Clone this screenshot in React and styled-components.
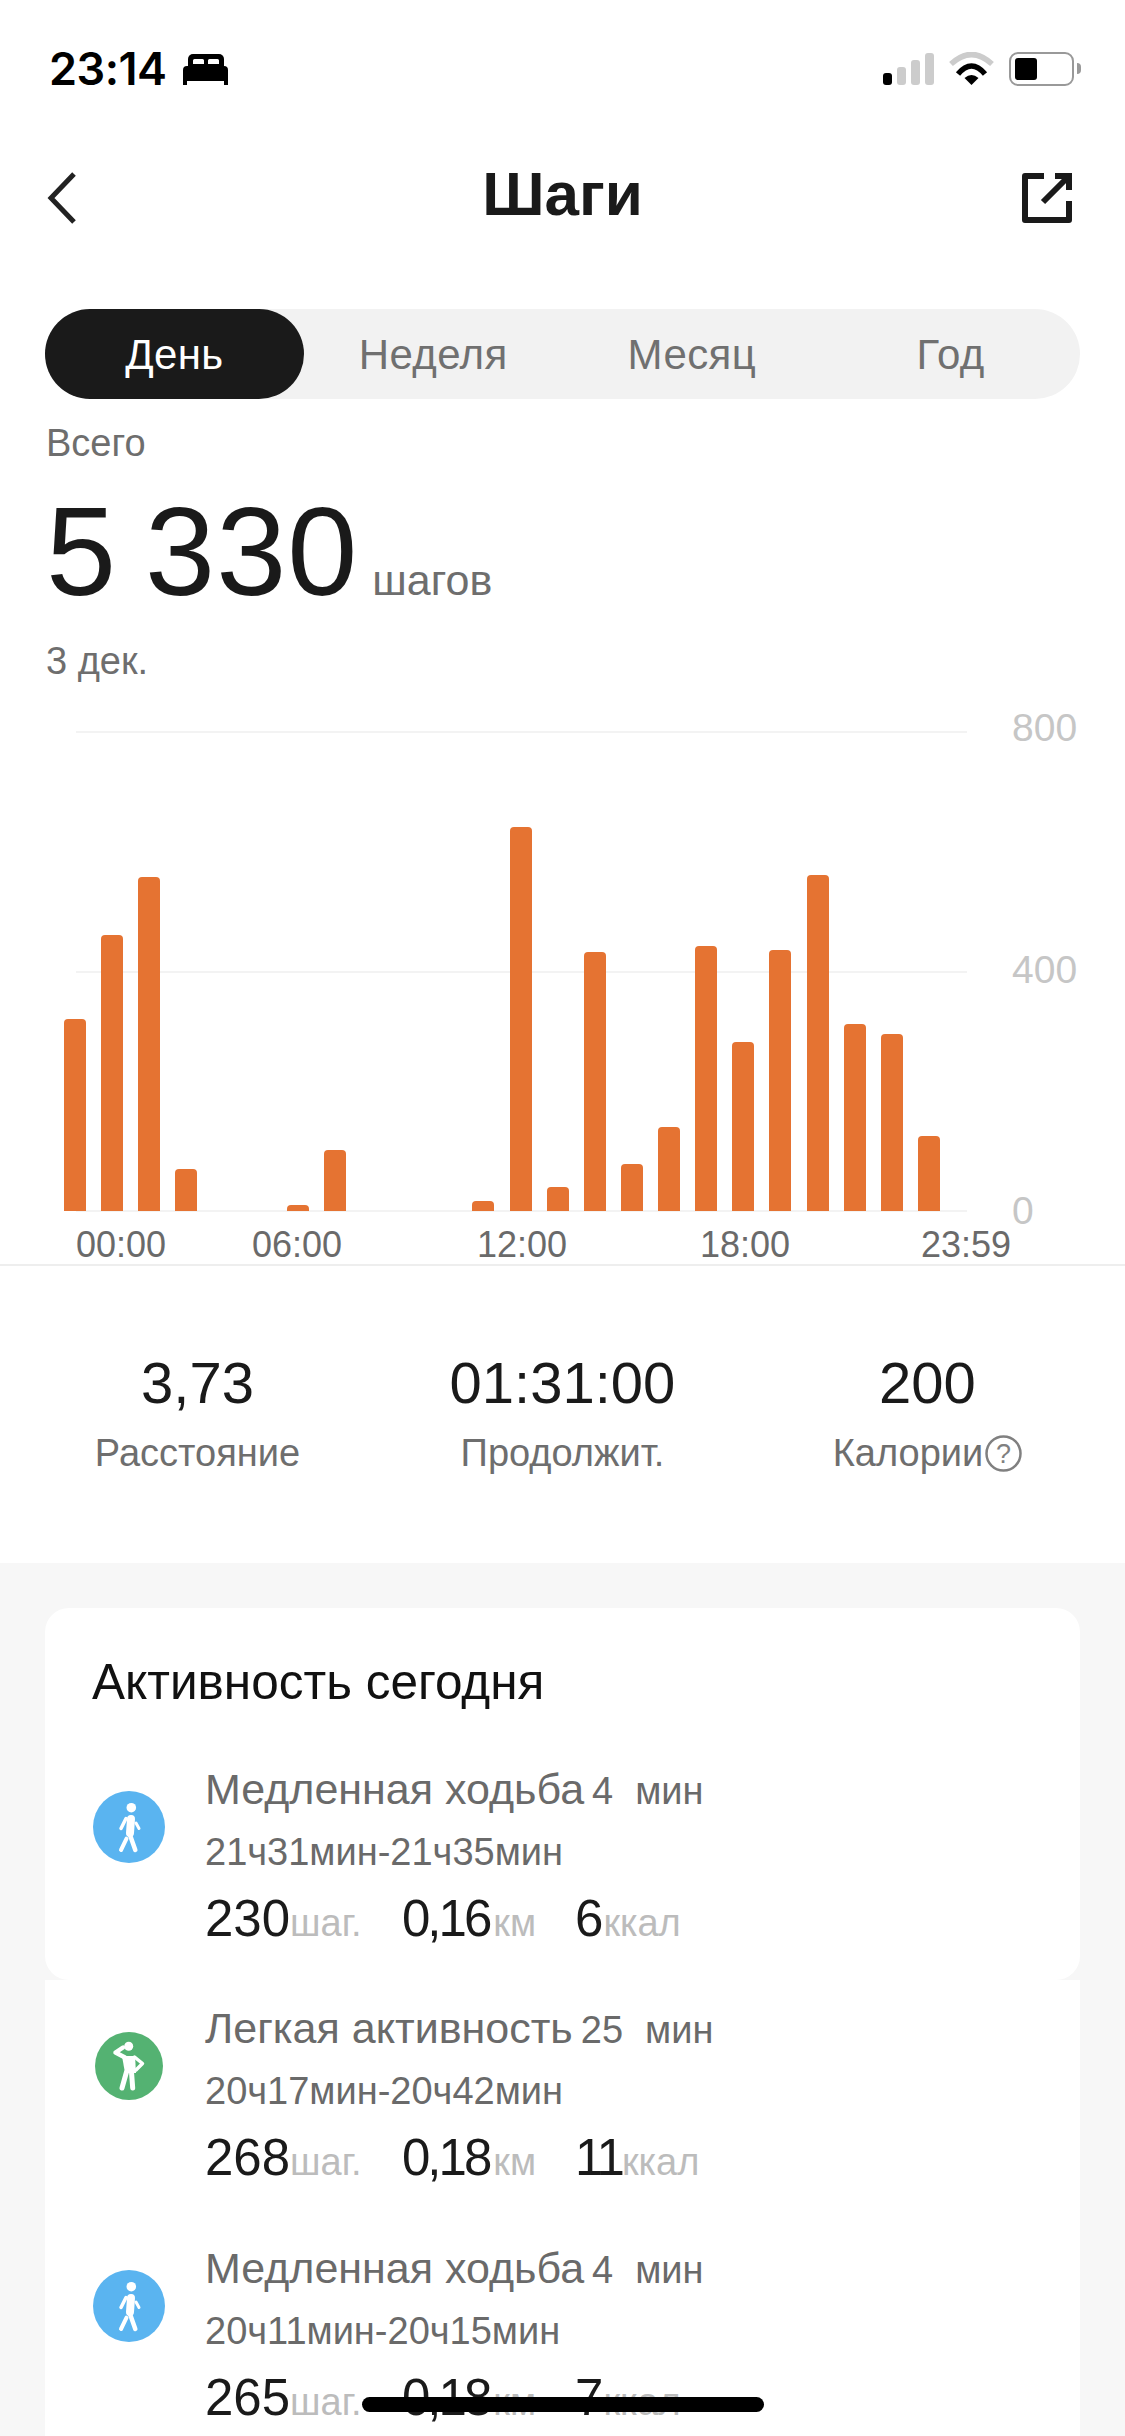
import React from 'react'
import styled, { createGlobalStyle } from 'styled-components'

const TEXT_FONT = '"Liberation Sans", Arial, sans-serif'
const UI_FONT = 'Inter, "Liberation Sans", sans-serif'

const GlobalStyle = createGlobalStyle`
  html, body {
    margin: 0;
    padding: 0;
    background: #fff;
  }
  * {
    box-sizing: border-box;
  }
`

const Screen = styled.div`
  position: relative;
  width: 1125px;
  height: 2436px;
  overflow: hidden;
  background: #fff;
  color: #1a1a1a;
  font-family: ${TEXT_FONT};
`

const StatusBar = styled.div`
  display: flex;
  justify-content: space-between;
  align-items: flex-start;
  height: 138px;
  padding: 47px 51px 0 49px;
`

const StatusLeft = styled.div`
  display: flex;
  align-items: center;
  gap: 16px;
`

const Time = styled.span`
  font-family: ${UI_FONT};
  font-size: 45px;
  line-height: 44px;
  font-weight: 600;
  color: #000;
  letter-spacing: -0.5px;
`

const StatusRight = styled.div`
  display: flex;
  align-items: flex-start;
  gap: 15px;
  padding-top: 5px;
`

const Signal = styled.div`
  display: flex;
  align-items: flex-end;
  gap: 5px;
  height: 33px;
`

const SignalBar = styled.div`
  width: 9px;
  height: ${p => p.$h}px;
  border-radius: 3px;
  background: ${p => (p.$on ? '#000' : '#ccc')};
`

const Battery = styled.div`
  position: relative;
  width: 65px;
  height: 34px;
  padding: 4px;
  border: 2.5px solid #999;
  border-radius: 9px;
  &::after {
    content: '';
    position: absolute;
    right: -9px;
    top: 9px;
    width: 4px;
    height: 11px;
    border-radius: 0 4px 4px 0;
    background: #999;
  }
`

const BatteryFill = styled.div`
  width: 22px;
  height: 100%;
  border-radius: 3px;
  background: #000;
`

const Header = styled.header`
  display: grid;
  grid-template-columns: 1fr auto 1fr;
  align-items: center;
  height: 112px;
  padding: 0 53px;
`

const HeaderIcon = styled.div`
  display: flex;
  justify-content: ${p => (p.$end ? 'flex-end' : 'flex-start')};
  margin: 8px 0 0 ${p => (p.$end ? 0 : -6)}px;
`

const Title = styled.h1`
  margin: 0;
  font-size: 62px;
  font-weight: 700;
  line-height: 70px;
  color: #1a1a1a;
`

const Tabs = styled.div`
  display: grid;
  grid-template-columns: repeat(4, 1fr);
  height: 90px;
  margin: 59px 45px 0;
  border-radius: 45px;
  background: #f2f2f2;
`

const Tab = styled.div`
  display: flex;
  align-items: center;
  justify-content: center;
  padding-top: 2px;
  border-radius: 45px;
  font-size: 42px;
  letter-spacing: 0.4px;
  background: ${p => (p.$active ? '#1a1a1a' : 'transparent')};
  color: ${p => (p.$active ? '#fff' : '#707070')};
`

const Summary = styled.section`
  padding: 24px 46px 0;
`

const SummaryLabel = styled.div`
  font-size: 38px;
  line-height: 40px;
  color: #6e6e6e;
`

const TotalRow = styled.div`
  display: flex;
  align-items: baseline;
  gap: 14px;
  margin-top: 24px;
`

const TotalValue = styled.span`
  font-size: 126px;
  line-height: 130px;
  letter-spacing: 1px;
  word-spacing: -8px;
  color: #1a1a1a;
`

const TotalUnit = styled.span`
  font-size: 43px;
  color: #6e6e6e;
`

const DateLabel = styled(SummaryLabel)`
  margin-top: 24px;
`

const Chart = styled.section`
  display: flex;
  margin: 50px 0 0 64px;
  height: 480px;
`

const Plot = styled.div`
  position: relative;
  display: flex;
  align-items: flex-end;
  gap: 15.13px;
  width: 948px;
`

const GridLines = styled.div`
  position: absolute;
  inset: 0 45px -1px 12px;
  display: flex;
  flex-direction: column;
  justify-content: space-between;
`

const GridLine = styled.div`
  height: 2px;
  background: #f3f3f3;
`

const Bar = styled.div`
  position: relative;
  flex: 0 0 22px;
  border-radius: 4px 4px 0 0;
  background: #e57332;
`

const YAxis = styled.div`
  display: flex;
  flex-direction: column;
  justify-content: space-between;
  font-size: 39px;
  color: #c6c6c6;
`

const YLabel = styled.div`
  height: 0;
  line-height: 0;
  margin-top: -3px;
`

const XAxis = styled.div`
  display: grid;
  grid-template-columns: 176px 225px 223px 221px auto;
  margin: 15px 0 0 76px;
  height: 38px;
  font-size: 36px;
  line-height: 37px;
  color: #6a6a6a;
`

const Divider = styled.div`
  height: 2px;
  background: #eee;
`

const Stats = styled.section`
  display: grid;
  grid-template-columns: repeat(3, 1fr);
  height: 297px;
  padding: 83px 15px 0;
`

const Stat = styled.div`
  display: flex;
  flex-direction: column;
  align-items: center;
`

const StatValue = styled.div`
  font-size: 58px;
  line-height: 68px;
  color: #1a1a1a;
`

const StatLabel = styled.div`
  display: flex;
  align-items: center;
  gap: 2px;
  margin-top: 14px;
  font-size: 38px;
  line-height: 44px;
  color: #6e6e6e;
`

const Activity = styled.section`
  height: 900px;
  padding: 45px 45px 0;
  background: #f7f7f7;
`

const Card = styled.div`
  height: 372px;
  padding: 49px 48px 0;
  border-radius: 24px;
  background: #fff;
`

const CardRest = styled.div`
  height: 500px;
  padding: 21px 48px 0;
  background: #fff;
`

const CardTitle = styled.h2`
  margin: 0 0 55px -1px;
  font-size: 49.5px;
  font-weight: 400;
  line-height: 50px;
  color: #111;
`

const Row = styled.div`
  display: flex;
  height: 240px;
`

const IconSlot = styled.div`
  display: flex;
  justify-content: center;
  flex: 0 0 112px;
  width: 112px;
  padding-right: 40px;
  padding-top: ${p => p.$top}px;
`

const RowBody = styled.div`
  flex: 1;
`

const RowHead = styled.div`
  display: flex;
  align-items: baseline;
  height: 54px;
  font-size: 43px;
  line-height: 54px;
  color: #6a6a6a;
`

const Duration = styled.span`
  margin-left: 8px;
  font-size: 38px;
`

const DurationUnit = styled.span`
  margin-left: 22px;
  font-size: 38px;
`

const RowTime = styled.div`
  margin-top: 9px;
  font-size: 38px;
  line-height: 54px;
  color: #6a6a6a;
`

const Metrics = styled.div`
  display: flex;
  align-items: baseline;
  margin-top: 10px;
`

const Metric = styled.div`
  display: flex;
  align-items: baseline;
  width: ${p => p.$w}px;
`

const MetricValue = styled.span`
  font-size: 51px;
  line-height: 60px;
  letter-spacing: ${p => (p.$tight ? -3 : 0)}px;
  color: #1a1a1a;
`

const MetricUnit = styled.span`
  margin-left: ${p => p.$gap || 0}px;
  font-size: 38px;
  color: #bcbcbc;
`

const HomeIndicator = styled.div`
  position: absolute;
  left: 362px;
  top: 2397px;
  width: 402px;
  height: 15px;
  border-radius: 8px;
  background: #000;
`

const bars = [192, 276, 334, 42, 0, 0, 6, 61, 0, 0, 0, 10, 384, 24, 259, 47, 84, 265, 169, 261, 336, 187, 177, 75]
const xLabels = ['00:00', '06:00', '12:00', '18:00', '23:59']

const BedIcon = () => (
  <svg width="45" height="31" viewBox="0 0 45 31">
    <path d="M5 13V5a5 5 0 0 1 5-5h26a5 5 0 0 1 5 5v8z" fill="#000" />
    <path d="M10 10V6.500A1.500 1.500 0 0 1 11.500 5h8A1.500 1.500 0 0 1 21 6.500V10zM25 10V6.500A1.500 1.500 0 0 1 26.500 5h8A1.500 1.500 0 0 1 36 6.500V10z" fill="#fff" />
    <path d="M4 12h37a4 4 0 0 1 4 4v15h-4v-4H4v4H0V16a4 4 0 0 1 4-4z" fill="#000" />
  </svg>
)

const WifiIcon = () => (
  <svg width="45" height="33" viewBox="0 0 45 33">
    <path d="M2 12Q22.500 -7 43 12" fill="none" stroke="#ccc" strokeWidth="5.500" />
    <path d="M9 22Q22.500 6 36 22" fill="none" stroke="#000" strokeWidth="5.500" />
    <path d="M15.500 26Q22.500 20 29.500 26L22.500 33z" fill="#000" />
  </svg>
)

const BackIcon = () => (
  <svg width="30" height="54" viewBox="0 0 30 54">
    <path d="M27 3L4 27l23 24" fill="none" stroke="#222" strokeWidth="5" />
  </svg>
)

const ShareIcon = () => (
  <svg width="50" height="50" viewBox="0 0 50 50">
    <path d="M22 3H3v44h44V28" fill="none" stroke="#1a1a1a" strokeWidth="6" strokeLinejoin="round" />
    <path d="M21 29L46 4M33 3h14v14" fill="none" stroke="#1a1a1a" strokeWidth="6" />
  </svg>
)

const HelpIcon = () => (
  <svg width="37" height="37" viewBox="0 0 37 37">
    <circle cx="18.500" cy="18.500" r="17" fill="none" stroke="#808080" strokeWidth="2.500" />
    <text x="18.500" y="28" textAnchor="middle" fontSize="27" fill="#808080" fontFamily="Liberation Sans">?</text>
  </svg>
)

const WalkIcon = () => (
  <svg width="72" height="72" viewBox="0 0 72 72">
    <circle cx="36" cy="36" r="36" fill="#5ab4f0" />
    <circle cx="38.300" cy="16.700" r="4.800" fill="#fff" />
    <g fill="none" stroke="#fff" strokeLinecap="round">
      <path d="M38 28L37 42" strokeWidth="8" />
      <path d="M33 27.500L28 37.500" strokeWidth="3.500" />
      <path d="M43 32L46 37.500" strokeWidth="3" />
      <path d="M33.500 47.700L28 59" strokeWidth="4" />
      <path d="M37 44L42.300 59" strokeWidth="4.500" />
    </g>
  </svg>
)

const StretchIcon = () => (
  <svg width="68" height="68" viewBox="0 0 68 68">
    <circle cx="34" cy="34" r="34" fill="#54b272" />
    <circle cx="33.700" cy="14.300" r="4.500" fill="#fff" />
    <path d="M27 24h13l1 17H30z" fill="#fff" />
    <g fill="none" stroke="#fff" strokeLinecap="round" strokeLinejoin="round">
      <path d="M30 25.500L20.500 20.500L28 15.500" strokeWidth="4.500" />
      <path d="M39.500 25L47.500 31.500L41 38" strokeWidth="3.500" />
      <path d="M31.500 40L27 56" strokeWidth="5" />
      <path d="M36.500 40L37.700 56" strokeWidth="5" />
    </g>
  </svg>
)

const ActivityRow = ({ kind, name, mins, span, steps, km, kcal }) => (
  <Row>
    <IconSlot $top={kind === 'walk' ? 29 : 31}>
      {kind === 'walk' ? <WalkIcon /> : <StretchIcon />}
    </IconSlot>
    <RowBody>
      <RowHead>
        {name}
        <Duration>{mins}</Duration>
        <DurationUnit>мин</DurationUnit>
      </RowHead>
      <RowTime>{span}</RowTime>
      <Metrics>
        <Metric $w={197}><MetricValue>{steps}</MetricValue><MetricUnit>шаг.</MetricUnit></Metric>
        <Metric $w={173}><MetricValue $tight>{km}</MetricValue><MetricUnit $gap={4}>км</MetricUnit></Metric>
        <Metric><MetricValue $tight={kcal.length > 1}>{kcal}</MetricValue><MetricUnit>ккал</MetricUnit></Metric>
      </Metrics>
    </RowBody>
  </Row>
)

export default function App () {
  return (
    <Screen>
      <GlobalStyle />
      <StatusBar>
        <StatusLeft>
          <Time>23:14</Time>
          <BedIcon />
        </StatusLeft>
        <StatusRight>
          <Signal>
            <SignalBar $on $h={12} />
            <SignalBar $h={18} />
            <SignalBar $h={25} />
            <SignalBar $h={32} />
          </Signal>
          <WifiIcon />
          <Battery><BatteryFill /></Battery>
        </StatusRight>
      </StatusBar>

      <Header>
        <HeaderIcon><BackIcon /></HeaderIcon>
        <Title>Шаги</Title>
        <HeaderIcon $end><ShareIcon /></HeaderIcon>
      </Header>

      <Tabs>
        <Tab $active>День</Tab>
        <Tab>Неделя</Tab>
        <Tab>Месяц</Tab>
        <Tab>Год</Tab>
      </Tabs>

      <Summary>
        <SummaryLabel>Всего</SummaryLabel>
        <TotalRow>
          <TotalValue>5 330</TotalValue>
          <TotalUnit>шагов</TotalUnit>
        </TotalRow>
        <DateLabel>3 дек.</DateLabel>
      </Summary>

      <Chart>
        <Plot>
          <GridLines>
            <GridLine />
            <GridLine />
            <GridLine />
          </GridLines>
          {bars.map((h, i) => <Bar key={i} style={{ height: h }} />)}
        </Plot>
        <YAxis>
          <YLabel>800</YLabel>
          <YLabel>400</YLabel>
          <YLabel>0</YLabel>
        </YAxis>
      </Chart>

      <XAxis>
        {xLabels.map(l => <span key={l}>{l}</span>)}
      </XAxis>
      <Divider />

      <Stats>
        <Stat>
          <StatValue>3,73</StatValue>
          <StatLabel>Расстояние</StatLabel>
        </Stat>
        <Stat>
          <StatValue>01:31:00</StatValue>
          <StatLabel>Продолжит.</StatLabel>
        </Stat>
        <Stat>
          <StatValue>200</StatValue>
          <StatLabel>Калории<HelpIcon /></StatLabel>
        </Stat>
      </Stats>

      <Activity>
        <Card>
          <CardTitle>Активность сегодня</CardTitle>
          <ActivityRow kind="walk" name="Медленная ходьба" mins="4" span="21ч31мин-21ч35мин" steps="230" km="0,16" kcal="6" />
        </Card>
        <CardRest>
          <ActivityRow kind="stretch" name="Легкая активность" mins="25" span="20ч17мин-20ч42мин" steps="268" km="0,18" kcal="11" />
          <ActivityRow kind="walk" name="Медленная ходьба" mins="4" span="20ч11мин-20ч15мин" steps="265" km="0,18" kcal="7" />
        </CardRest>
      </Activity>

      <HomeIndicator />
    </Screen>
  )
}
